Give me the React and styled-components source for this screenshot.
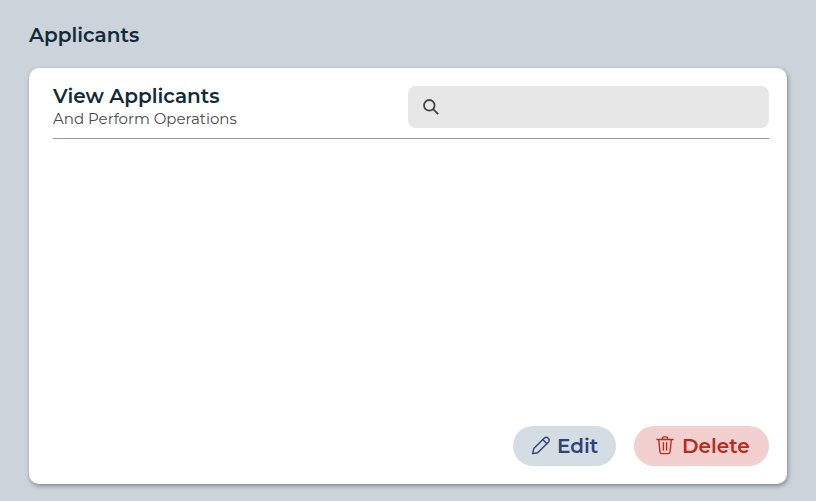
import React from "react";
import styled, { createGlobalStyle } from "styled-components";

const GlobalStyle = createGlobalStyle`
  * { box-sizing: border-box; }
  body {
    margin: 0;
    background: #ccd3da;
    font-family: Montserrat, Inter, sans-serif;
  }
`;

const Page = styled.main`
  height: 501px;
  padding: 20px 29px 17px;
  display: flex;
  flex-direction: column;
  overflow: hidden;
`;

const PageTitle = styled.h1`
  margin: 0 0 18px;
  font-size: 20px;
  line-height: 30px;
  font-weight: 600;
  color: #122b38;
`;

const Card = styled.section`
  flex: 1;
  display: flex;
  flex-direction: column;
  justify-content: space-between;
  padding: 18px 18px 18px 24px;
  border-radius: 10px;
  background: #fff;
  box-shadow: 1px 2px 4px rgba(50, 65, 70, 0.5);
`;

const CardHeader = styled.header`
  display: flex;
  justify-content: space-between;
  height: 53px;
  border-bottom: 1px solid #9699a8;
`;

const CardTitle = styled.h2`
  margin: -3px 0 0;
  font-size: 20px;
  line-height: 26px;
  font-weight: 600;
  color: #122b38;
`;

const CardSubtitle = styled.p`
  margin: 0;
  font-size: 15px;
  line-height: 20px;
  font-weight: 400;
  color: #4b4b4b;
`;

const SearchField = styled.label`
  display: flex;
  align-items: center;
  gap: 8px;
  width: 361px;
  height: 42px;
  padding: 0 13px;
  border-radius: 8px;
  background: #e7e7e7;
  color: #444;
`;

const SearchInput = styled.input`
  flex: 1;
  min-width: 0;
  border: 0;
  outline: 0;
  background: transparent;
  font: inherit;
`;

const Actions = styled.footer`
  display: flex;
  justify-content: flex-end;
  gap: 18px;
`;

const tones = {
  edit: { fg: "#2e4379", bg: "#d5dde4", width: "103px" },
  remove: { fg: "#b92c1b", bg: "#f3d0d0", width: "135px" },
};

const ActionButton = styled.button`
  display: flex;
  align-items: center;
  gap: ${({ $tone }) => ($tone === "edit" ? "6px" : "7px")};
  width: ${({ $tone }) => tones[$tone].width};
  height: 40px;
  padding: 0 0 0 ${({ $tone }) => ($tone === "edit" ? "18px" : "21px")};
  border: 0;
  border-radius: 20px;
  background: ${({ $tone }) => tones[$tone].bg};
  color: ${({ $tone }) => tones[$tone].fg};
  font-family: inherit;
  font-size: 20px;
  line-height: 24px;
  font-weight: 600;
`;

const LineIcon = styled.svg`
  flex: none;
  width: 20px;
  height: 20px;
  fill: none;
  stroke: currentColor;
  stroke-width: ${({ $weight = 1.4 }) => $weight};
  stroke-linecap: ${({ $cap = "round" }) => $cap};
  stroke-linejoin: round;
`;

function SearchIcon() {
  return (
    <LineIcon viewBox="0 0 20 20" $weight={1.8} $cap="butt" aria-hidden="true">
      <circle cx="8.3" cy="8.3" r="5.3" />
      <path d="m12.1 12.1 5.1 5.1" />
    </LineIcon>
  );
}

function PencilIcon() {
  return (
    <LineIcon viewBox="0 0 20 20" aria-hidden="true">
      <path d="M1.6 17.6 2.8 12.6 13.2 2.2a2.9 2.9 0 0 1 4.1 4.1L6.7 16.7Z" />
      <path d="m11.8 3.6 4.1 4.1" />
    </LineIcon>
  );
}

function TrashIcon() {
  return (
    <LineIcon viewBox="0 0 20 20" aria-hidden="true">
      <path d="M1.9 3.5h16.2M7.2 3.3c0-1.6.7-2.4 1.8-2.4h2c1.1 0 1.8.8 1.8 2.4M3.7 3.7l1.3 12.3c.1 1 .7 1.6 1.6 1.6h6.8c.9 0 1.5-.6 1.6-1.6l1.3-12.3M8.4 6.8v7.2M11.6 6.8v7.2" />
    </LineIcon>
  );
}

export default function App() {
  return (
    <Page>
      <GlobalStyle />
      <PageTitle>Applicants</PageTitle>
      <Card>
        <CardHeader>
          <div>
            <CardTitle>View Applicants</CardTitle>
            <CardSubtitle>And Perform Operations</CardSubtitle>
          </div>
          <SearchField>
            <SearchIcon />
            <SearchInput type="search" aria-label="Search applicants" />
          </SearchField>
        </CardHeader>
        <Actions>
          <ActionButton type="button" $tone="edit">
            <PencilIcon />
            Edit
          </ActionButton>
          <ActionButton type="button" $tone="remove">
            <TrashIcon />
            Delete
          </ActionButton>
        </Actions>
      </Card>
    </Page>
  );
}
